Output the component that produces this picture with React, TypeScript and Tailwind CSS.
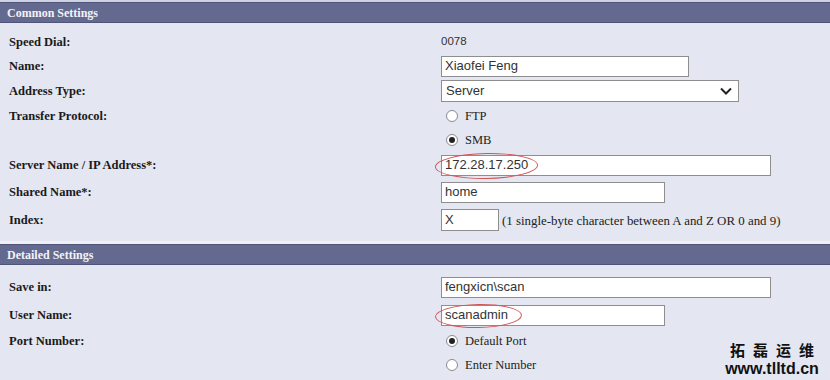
import React from 'react';

const serif = "font-['Liberation_Serif','Times_New_Roman',serif]";
const sans = "font-['Liberation_Sans',Arial,sans-serif]";

const SectionBar: React.FC<{ title: string }> = ({ title }) => (
  <div className="border-y border-[#4f5478] bg-[#646a8f] h-[21px] flex items-center pl-[7px]">
    <span className={`${serif} text-[12px] font-bold text-[#f2f3f8]`}>{title}</span>
  </div>
);

const Row: React.FC<{ label?: string; h: string; children?: React.ReactNode }> = ({ label, h, children }) => (
  <div className={`flex items-center ${h}`}>
    <div className={`w-[441px] shrink-0 pl-[9px] ${serif} text-[12.5px] font-bold text-[#1a1a1a]`}>{label}</div>
    <div className="flex items-center">{children}</div>
  </div>
);

const TextBox: React.FC<{ value: string; w: string; ring?: string }> = ({ value, w, ring }) => (
  <div className={`relative ${w} h-[21px] bg-white border border-[#8e8e8e] flex items-center pl-[3px] ${sans} text-[13px] text-[#333]`}>
    {value}
    {ring && <div className={`absolute ${ring} rounded-[50%] border-[1.5px] border-[#d25555] -rotate-1`} />}
  </div>
);

const Radio: React.FC<{ checked?: boolean; label: string }> = ({ checked, label }) => (
  <div className="flex items-center pl-[5px]">
    <div className="w-[12px] h-[12px] rounded-full border border-[#8a8a8a] bg-white flex items-center justify-center">
      {checked && <div className="w-[6px] h-[6px] rounded-full bg-[#222]" />}
    </div>
    <span className={`ml-[7px] ${serif} text-[12.5px] text-[#222]`}>{label}</span>
  </div>
);

const App: React.FC = () => {
  return (
    <div className="w-[830px] h-[380px] bg-[#e4e7f1] overflow-hidden relative">
      <div className="h-[2px] bg-[#cfd2e2]" />
      <SectionBar title="Common Settings" />

      <div className="pt-[8px]">
        <Row label="Speed Dial:" h="h-[22px]">
          <span className={`${sans} text-[11.5px] text-[#333]`}>0078</span>
        </Row>
        <Row label="Name:" h="h-[26px]">
          <TextBox value="Xiaofei Feng" w="w-[248px]" />
        </Row>
        <Row label="Address Type:" h="h-[24px]">
          <div className={`w-[298px] h-[22px] bg-white border border-[#8e8e8e] flex items-center justify-between pl-[4px] pr-[6px] ${sans} text-[13px] text-[#333]`}>
            Server
            <svg width="12" height="8" viewBox="0 0 12 8" fill="none" stroke="#222" strokeWidth="2">
              <path d="M1 1.5l5 5 5-5" />
            </svg>
          </div>
        </Row>
        <Row label="Transfer Protocol:" h="h-[26px]">
          <Radio label="FTP" />
        </Row>
        <Row h="h-[22px]">
          <Radio checked label="SMB" />
        </Row>
        <Row label="Server Name / IP Address*:" h="h-[28px]">
          <TextBox value="172.28.17.250" w="w-[330px]" ring="left-[-7px] top-[-3px] w-[103px] h-[26px]" />
        </Row>
        <Row label="Shared Name*:" h="h-[26px]">
          <TextBox value="home" w="w-[224px]" />
        </Row>
        <Row label="Index:" h="h-[30px]">
          <div className={`w-[58px] h-[22px] bg-white border border-[#8e8e8e] flex items-center pl-[3px] ${sans} text-[13px] text-[#333]`}>X</div>
          <span className={`ml-[3px] mt-[4px] ${serif} text-[12.9px] text-[#222]`}>(1 single-byte character between A and Z OR 0 and 9)</span>
        </Row>
      </div>

      <div className="mt-[6px] h-[3px] bg-[#eef0f6]" />
      <SectionBar title="Detailed Settings" />

      <div className="pt-[9px]">
        <Row label="Save in:" h="h-[26px]">
          <TextBox value="fengxicn\scan" w="w-[330px]" />
        </Row>
        <Row label="User Name:" h="h-[30px]">
          <TextBox value="scanadmin" w="w-[224px]" ring="left-[-7px] top-[-2px] w-[87px] h-[24px]" />
        </Row>
        <Row label="Port Number:" h="h-[22px]">
          <Radio checked label="Default Port" />
        </Row>
        <Row h="h-[26px]">
          <Radio label="Enter Number" />
        </Row>
      </div>

      <div className="absolute right-[8px] bottom-[3px] flex flex-col items-center">
        <span className="block font-['Noto_Sans_CJK_SC',sans-serif] text-[15px] leading-[20px] font-bold text-[#111] tracking-[8px] pl-[8px]">拓磊运维</span>
        <span className={`block ${sans} text-[16px] leading-[17px] font-bold text-[#111]`}>www.tlltd.cn</span>
      </div>
    </div>
  );
};

export default App;
